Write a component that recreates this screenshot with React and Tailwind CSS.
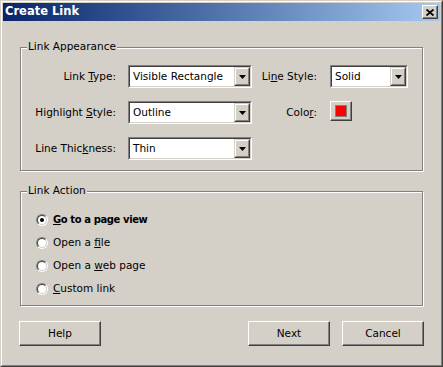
import React from 'react';

const raised = 'border border-t-white border-l-white border-b-[#404040] border-r-[#404040] shadow-[inset_-1px_-1px_0_#808080]';

function DropButton() {
  return (
    <div className="h-full w-[16px] border border-t-[#d4d0c8] border-l-[#d4d0c8] border-b-[#404040] border-r-[#404040]">
      <div className="h-full w-full border border-t-white border-l-white border-b-[#808080] border-r-[#808080] bg-[#d4d0c8] flex items-center justify-center">
        <svg width="7" height="4" viewBox="0 0 7 4" className="block">
          <polygon points="0,0 7,0 3.5,4" fill="#000" />
        </svg>
      </div>
    </div>
  );
}

function Combo({ value, width }) {
  return (
    <div className={`h-[23px] ${width} border border-t-[#808080] border-l-[#808080] border-b-white border-r-white`}>
      <div className="h-full border border-t-[#404040] border-l-[#404040] border-b-[#d4d0c8] border-r-[#d4d0c8] bg-white flex items-center">
        <span className="flex-1 pl-[3px] whitespace-nowrap">{value}</span>
        <DropButton />
      </div>
    </div>
  );
}

function Radio({ checked, children, bold }) {
  return (
    <div className="h-[23px] flex items-center gap-[5px]">
      <div className="w-[12px] h-[12px] rounded-full border border-t-[#808080] border-l-[#808080] border-b-white border-r-white">
        <div className="w-full h-full rounded-full border border-t-[#404040] border-l-[#404040] border-b-[#d4d0c8] border-r-[#d4d0c8] bg-white flex items-center justify-center">
          {checked && <div className="w-[4px] h-[4px] rounded-full bg-black" />}
        </div>
      </div>
      <span className={bold ? 'font-bold text-[10px] tracking-[-0.4px]' : ''}>{children}</span>
    </div>
  );
}

function Group({ title, className, children }) {
  return (
    <div className={`relative border border-[#808080] shadow-[1px_1px_0_white,inset_1px_1px_0_white] ${className}`}>
      <span className="absolute left-[6px] top-[-8px] px-[1px] leading-[13px] bg-[#d4d0c8]">{title}</span>
      {children}
    </div>
  );
}

export default function App() {
  return (
    <div className="w-[443px] h-[367px] bg-[#d4d0c8] text-black text-[10.5px] font-['DejaVu_Sans',sans-serif]">
      <div className="h-full border border-t-[#d4d0c8] border-l-[#d4d0c8] border-b-[#404040] border-r-[#404040]">
        <div className="h-full border border-t-white border-l-white border-b-[#808080] border-r-[#808080] p-px flex flex-col">
          {/* title bar */}
          <div className="h-[18px] flex items-center justify-between pl-[2px] pr-[2px] bg-gradient-to-r from-[#0a246a] to-[#a6caf0]">
            <span className="text-white font-bold text-[11.5px] leading-none">Create Link</span>
            <div className={`w-[16px] h-[14px] bg-[#d4d0c8] flex items-center justify-center ${raised}`}>
              <svg width="8" height="7" viewBox="0 0 8 7" className="block">
                <path d="M0.5 0.5 L7.5 6.5 M7.5 0.5 L0.5 6.5" stroke="#000" strokeWidth="1.8" />
              </svg>
            </div>
          </div>

          <div className="flex-1 px-[17px] pt-[26px]">
            <Group title="Link Appearance" className="h-[124px] pt-[17px] flex flex-col gap-[13px]">
              <div className="flex items-center">
                <span className="w-[95px] text-right">Link <u>T</u>ype:</span>
                <div className="ml-[12px]"><Combo value="Visible Rectangle" width="w-[124px]" /></div>
                <span className="w-[65px] text-right">Li<u>n</u>e Style:</span>
                <div className="ml-[13px]"><Combo value="Solid" width="w-[78px]" /></div>
              </div>
              <div className="flex items-center">
                <span className="w-[95px] text-right">Highlight <u>S</u>tyle:</span>
                <div className="ml-[12px]"><Combo value="Outline" width="w-[124px]" /></div>
                <span className="w-[65px] text-right">Colo<u>r</u>:</span>
                <div className={`ml-[13px] mb-[3px] w-[22px] h-[20px] bg-[#d4d0c8] flex items-center justify-center ${raised}`}>
                  <div className="w-[12px] h-[12px] border border-[#808080] bg-[#ff0000]" />
                </div>
              </div>
              <div className="flex items-center">
                <span className="w-[95px] text-right">Line Thic<u>k</u>ness:</span>
                <div className="ml-[12px]"><Combo value="Thin" width="w-[124px]" /></div>
              </div>
            </Group>

            <Group title="Link Action" className="mt-[20px] h-[115px] pt-[16px] pl-[15px]">
              <Radio checked bold><u>G</u>o to a page view</Radio>
              <Radio>Open a <u>f</u>ile</Radio>
              <Radio>Open a <u>w</u>eb page</Radio>
              <Radio><u>C</u>ustom link</Radio>
            </Group>

            <div className="mt-[15px] -mx-px flex">
              <button className={`w-[82px] h-[25px] bg-[#d4d0c8] ${raised}`}>Help</button>
              <button className={`ml-auto w-[82px] h-[25px] bg-[#d4d0c8] ${raised}`}>Next</button>
              <button className={`ml-[12px] w-[82px] h-[25px] bg-[#d4d0c8] ${raised}`}>Cancel</button>
            </div>
          </div>
        </div>
      </div>
    </div>
  );
}
